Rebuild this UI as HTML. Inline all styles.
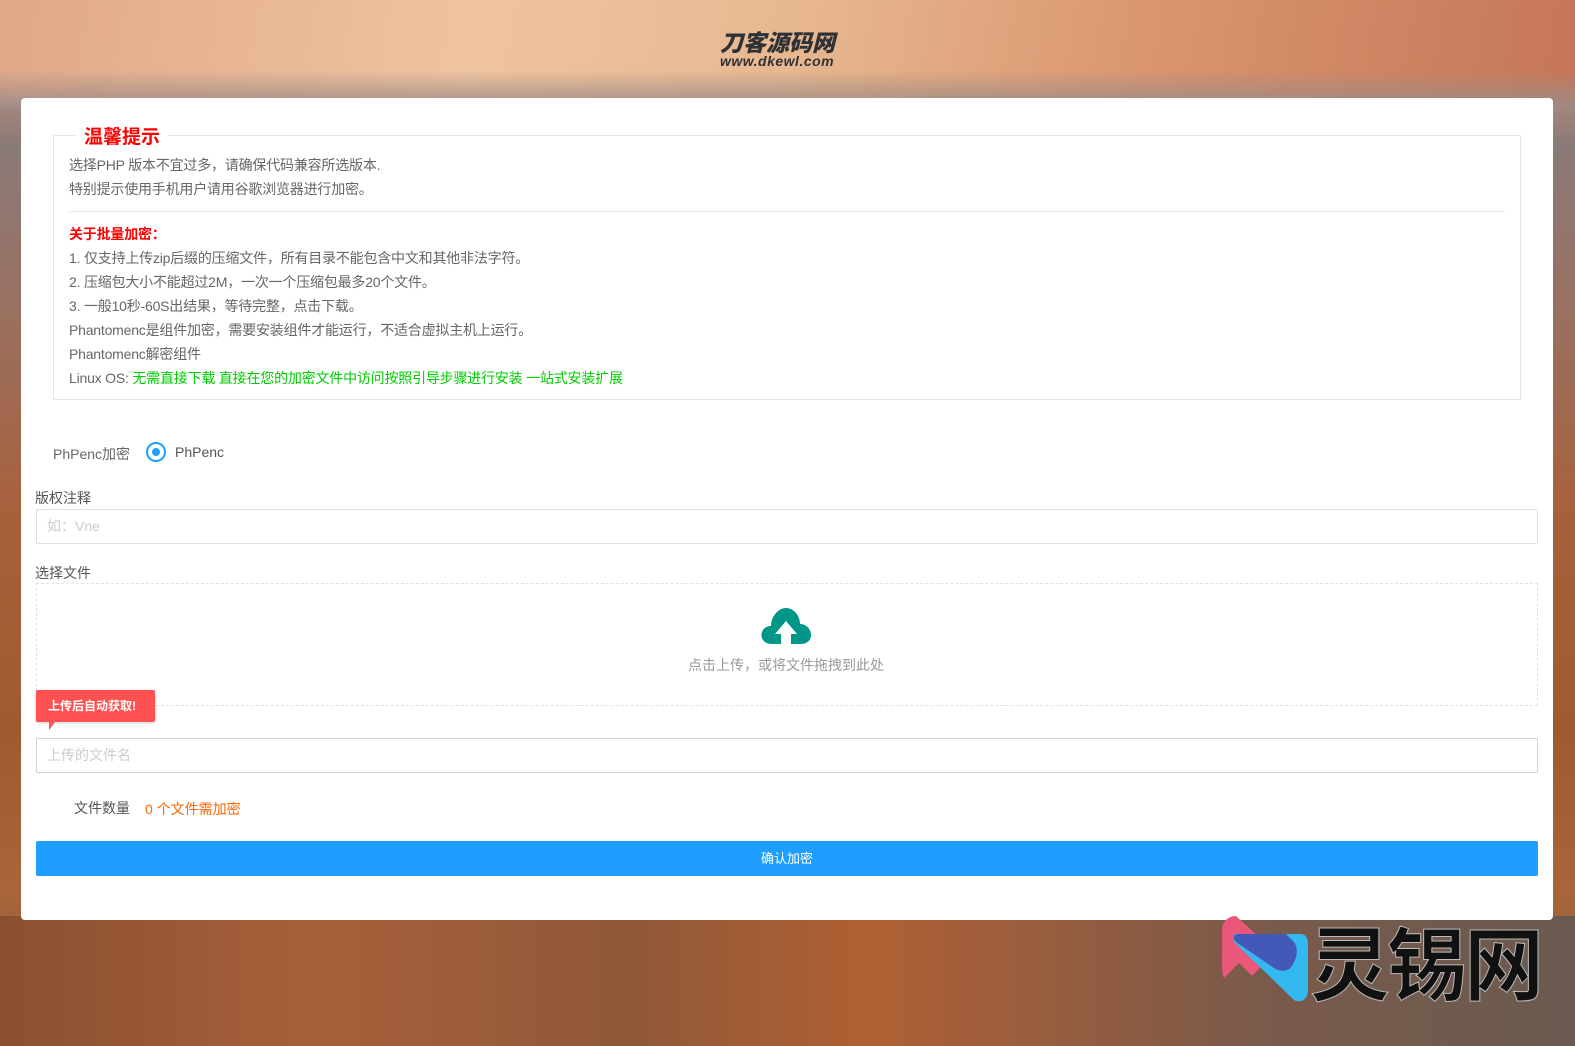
<!DOCTYPE html>
<html><head><meta charset="utf-8">
<style>
*{margin:0;padding:0;box-sizing:border-box}
html,body{width:1575px;height:1046px;overflow:hidden}
body{position:relative;font-family:"Liberation Sans","Noto Sans CJK SC",sans-serif;font-size:13px;color:#666;
background:linear-gradient(180deg,#d9a07c 0%,#e8b48f 4%,#c98a6a 8%,#a6867a 10%,#8a7a78 14%,#9a7060 30%,#a8603a 50%,#a05a30 70%,#a8653a 85%,#8a5a40 100%);}
.sky{position:absolute;left:0;top:0;width:1575px;height:110px;background:linear-gradient(100deg,#e0a888 0%,#f0c4a0 30%,#e8b890 50%,#d8926c 75%,#c57658 100%)}
.mtn{position:absolute;left:0;top:70px;width:1575px;height:40px;background:linear-gradient(180deg,rgba(0,0,0,0),#9c8a86)}
.bottom{position:absolute;left:0;top:916px;width:1575px;height:130px;background:linear-gradient(90deg,#8a5030,#a8603a 20%,#905838 40%,#b06034 55%,#7a5a4a 80%,#6a5a50)}
.logo{position:absolute;left:720px;top:28px;color:#2e3236;font-weight:bold;font-style:italic}
.logo .a{font-size:23px;letter-spacing:0px;line-height:26px;font-family:"Noto Sans CJK SC",sans-serif;font-weight:900}
.logo .b{font-size:14px;line-height:14px;font-family:"Liberation Sans",sans-serif;letter-spacing:0.5px}
.card{position:absolute;left:21px;top:98px;width:1532px;height:822px;background:#fff;border-radius:4px}
fieldset{position:absolute;left:32px;top:24px;width:1468px;height:278px;border:1px solid #e6e6e6;padding:0 15px}
legend{margin-left:7px;padding:0 8px;color:#f00;font-size:19px;font-weight:bold;font-family:"Liberation Sans","Noto Sans CJK SC",sans-serif}
.fs p{line-height:24px;font-size:14px;letter-spacing:-0.2px}
.hr{height:1px;background:#e6e6e6;margin:10px 0 10px}
.red{color:#f00;font-weight:bold}
.green{color:#0c0}
.abs{position:absolute}
.input{position:absolute;left:15px;width:1502px;border:1px solid #e0e0e0;border-radius:2px;color:#ccc;padding-left:10px;line-height:33px;font-size:14px}
</style></head><body>
<div class="sky"></div><div class="mtn"></div><div class="bottom"></div>
<div class="logo"><div class="a">刀客源码网</div><div class="b">www.dkewl.com</div></div>
<div class="card">
<fieldset class="fs"><legend>温馨提示</legend>
<p style="margin-top:4px">选择PHP 版本不宜过多，请确保代码兼容所选版本.</p>
<p>特别提示使用手机用户请用谷歌浏览器进行加密。</p>
<div class="hr"></div>
<p class="red">关于批量加密：</p>
<p>1. 仅支持上传zip后缀的压缩文件，所有目录不能包含中文和其他非法字符。</p>
<p>2. 压缩包大小不能超过2M，一次一个压缩包最多20个文件。</p>
<p>3. 一般10秒-60S出结果，等待完整，点击下载。</p>
<p>Phantomenc是组件加密，需要安装组件才能运行，不适合虚拟主机上运行。</p>
<p>Phantomenc解密组件</p>
<p>Linux OS: <span class="green">无需直接下载 直接在您的加密文件中访问按照引导步骤进行安装 一站式安装扩展</span></p>
</fieldset>
<div class="abs" style="left:32px;top:346px;font-size:14px">PhPenc加密</div>
<div class="abs" style="left:125px;top:344px;width:20px;height:20px;border:2px solid #1e9fff;border-radius:50%"><div style="width:8px;height:8px;background:#1e9fff;border-radius:50%;margin:4px"></div></div>
<div class="abs" style="left:154px;top:346px;color:#555;font-size:14px">PhPenc</div>
<div class="abs" style="left:14px;top:390px;color:#555;font-size:14px">版权注释</div>
<div class="input" style="top:411px;height:35px">如：Vne</div>
<div class="abs" style="left:14px;top:465px;color:#555;font-size:14px">选择文件</div>
<div class="abs" style="left:15px;top:485px;width:1502px;height:123px;border:1px dashed #e2e2e2"></div>
<svg class="abs" style="left:739px;top:508px" width="52" height="40" viewBox="0 0 52 40"><path fill="#009688" d="M12 38 C3 38 0 31 2 26 C4 21 8 20 11 20 C11 11 18 2 26 2 C34 2 40 10 40 18 C46 18 51 23 51 29 C51 35 46 38 41 38 L31 38 L31 28 L37 28 L26 15 L15 28 L21 28 L21 38 Z"/></svg>
<div class="abs" style="left:667px;top:557px;color:#999;font-size:14px">点击上传，或将文件拖拽到此处</div>
<div class="abs" style="left:15px;top:592px;width:119px;height:32px;background:#ff5151;color:#fff;font-size:12px;font-weight:bold;line-height:32px;padding-left:12px;border-radius:2px;box-shadow:0 1px 3px rgba(0,0,0,.2)">上传后自动获取!</div>
<div class="abs" style="left:28px;top:624px;width:0;height:0;border-left:6px solid #ff5151;border-bottom:8px solid transparent"></div>
<div class="input" style="top:640px;height:35px;border-color:#d2d2d2">上传的文件名</div>
<div class="abs" style="left:53px;top:700px;color:#555;font-size:14px">文件数量</div>
<div class="abs" style="left:124px;top:701px;color:#f60;font-size:14px">0 个文件需加密</div>
<div class="abs" style="left:15px;top:743px;width:1502px;height:35px;background:#1e9fff;border-radius:2px;color:#fff;text-align:center;line-height:35px;font-size:13px">确认加密</div>
</div>
<svg class="abs" style="left:1222px;top:916px" width="90" height="90" viewBox="0 0 90 90"><path fill="#e9577a" d="M14 0 L40 24 L2 62 C0 58 0 54 0 50 L0 14 C0 6 6 0 14 0Z"/><path fill="#e9577a" d="M10 0 L50 40 L30 60 L0 30Z"/><path fill="#33b8f0" d="M12 18 L78 18 C84 18 86 22 86 28 L86 74 C86 82 80 88 72 84 L12 26Z"/><path fill="#4458b8" d="M16 18 L64 18 L72 26 C76 32 76 40 70 50 C66 56 58 56 52 52 L14 26 C10 22 12 18 16 18Z"/></svg>
<div class="abs" style="left:1310px;top:910px;font-size:80px;font-weight:bold;color:#111;line-height:100px;font-family:'Noto Sans CJK SC',sans-serif;letter-spacing:-3px;-webkit-text-stroke:1px #bbb">灵锡网</div>
</body></html>
